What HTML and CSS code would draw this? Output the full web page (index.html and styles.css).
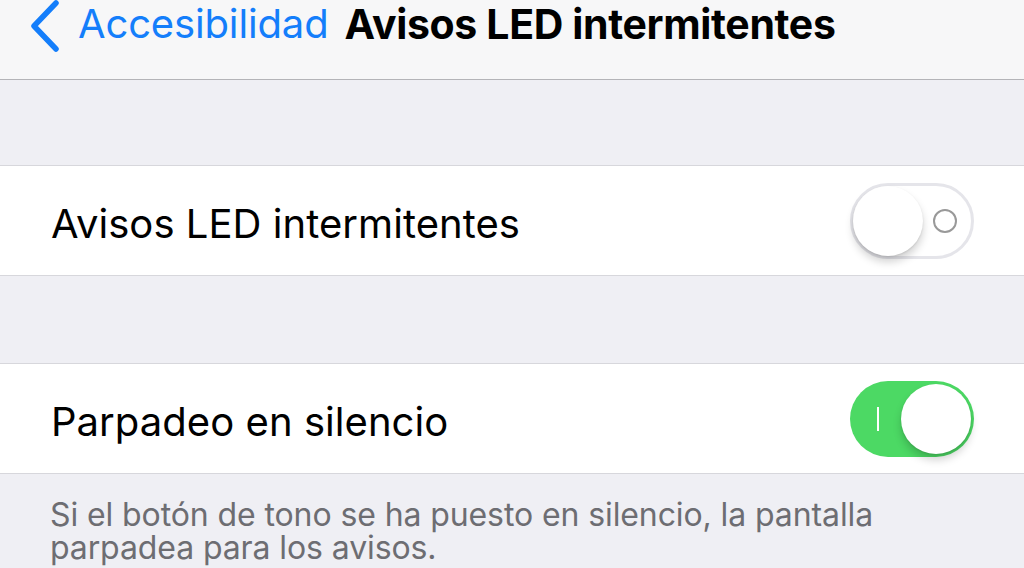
FILE: index.html
```html
<!DOCTYPE html>
<html lang="es">
<head>
<meta charset="utf-8">
<link rel="stylesheet" href="styles.css">
</head>
<body>
<header class="nav">
  <div class="back">
    <svg class="chev" width="34" height="52" viewBox="0 0 34 52"><path d="M28 3 L6 26 L28 49" fill="none" stroke="#147efb" stroke-width="5.5" stroke-linecap="round" stroke-linejoin="round"/></svg>
    <span class="back-label">Accesibilidad</span>
  </div>
  <h1 class="title">Avisos LED intermitentes</h1>
</header>
<main class="content">
  <div class="spacer first"></div>
  <section class="group">
    <div class="row">
      <span class="label">Avisos LED intermitentes</span>
      <div class="switch off"><span class="ring"></span><span class="knob"></span></div>
    </div>
  </section>
  <div class="spacer second"></div>
  <section class="group">
    <div class="row">
      <span class="label">Parpadeo en silencio</span>
      <div class="switch on"><span class="bar"></span><span class="knob"></span></div>
    </div>
  </section>
  <p class="footer">Si el botón de tono se ha puesto en silencio, la pantalla parpadea para los avisos.</p>
</main>
</body>
</html>
```

FILE: styles.css
```css
html, body { margin: 0; padding: 0; }
body {
  width: 1024px; height: 568px; overflow: hidden;
  background: #efeff4;
  font-family: Inter, "Liberation Sans", sans-serif;
  color: #000;
}
.nav {
  height: 79px;
  background: #f7f7f8;
  border-bottom: 1px solid #b4b4b8;
  display: flex;
  align-items: flex-start;
  padding-left: 28px;
}
.back { display: flex; align-items: flex-start; }
.chev { display: block; }
.back-label {
  color: #147efb; font-size: 40px; line-height: 48px; margin-left: 16px;
  letter-spacing: -0.15px;
}
.title {
  margin: 0 0 0 16px; font-size: 41px; font-weight: 700; line-height: 48px;
  letter-spacing: -0.35px;
}
.spacer.first { height: 85px; }
.spacer.second { height: 87px; }
.group {
  background: #fff;
  border-top: 1px solid #d7d7dc;
  border-bottom: 1px solid #d7d7dc;
}
.row {
  height: 109px;
  display: flex; align-items: center; justify-content: space-between;
  padding: 0 50px 0 51px;
}
.label { font-size: 40px; letter-spacing: 0.05px; padding-top: 5px; }
.switch {
  position: relative; width: 124px; height: 76px; border-radius: 38px;
  box-sizing: border-box;
}
.switch.off { background: #fff; border: 3px solid #e5e5ea; }
.switch.on { background: #4cd964; }
.knob {
  position: absolute; top: 3px; width: 70px; height: 70px; border-radius: 50%;
  background: #fff;
  box-shadow: 0 6px 8px rgba(0,0,0,0.18), 0 1px 2px rgba(0,0,0,0.1);
}
.switch.off .knob { left: 0; top: 0; }
.switch.on .knob { left: 51px; }
.ring {
  position: absolute; left: 80px; top: 23px; width: 20px; height: 20px;
  border: 2px solid #999; border-radius: 50%;
}
.bar {
  position: absolute; left: 27px; top: 26px; width: 2px; height: 24px; background: #fff;
}
.footer {
  margin: 24px 0 0 0; padding: 0 40px 0 50px;
  font-size: 32px; line-height: 33px; color: #6d6d72;
  letter-spacing: -0.1px;
}
```
